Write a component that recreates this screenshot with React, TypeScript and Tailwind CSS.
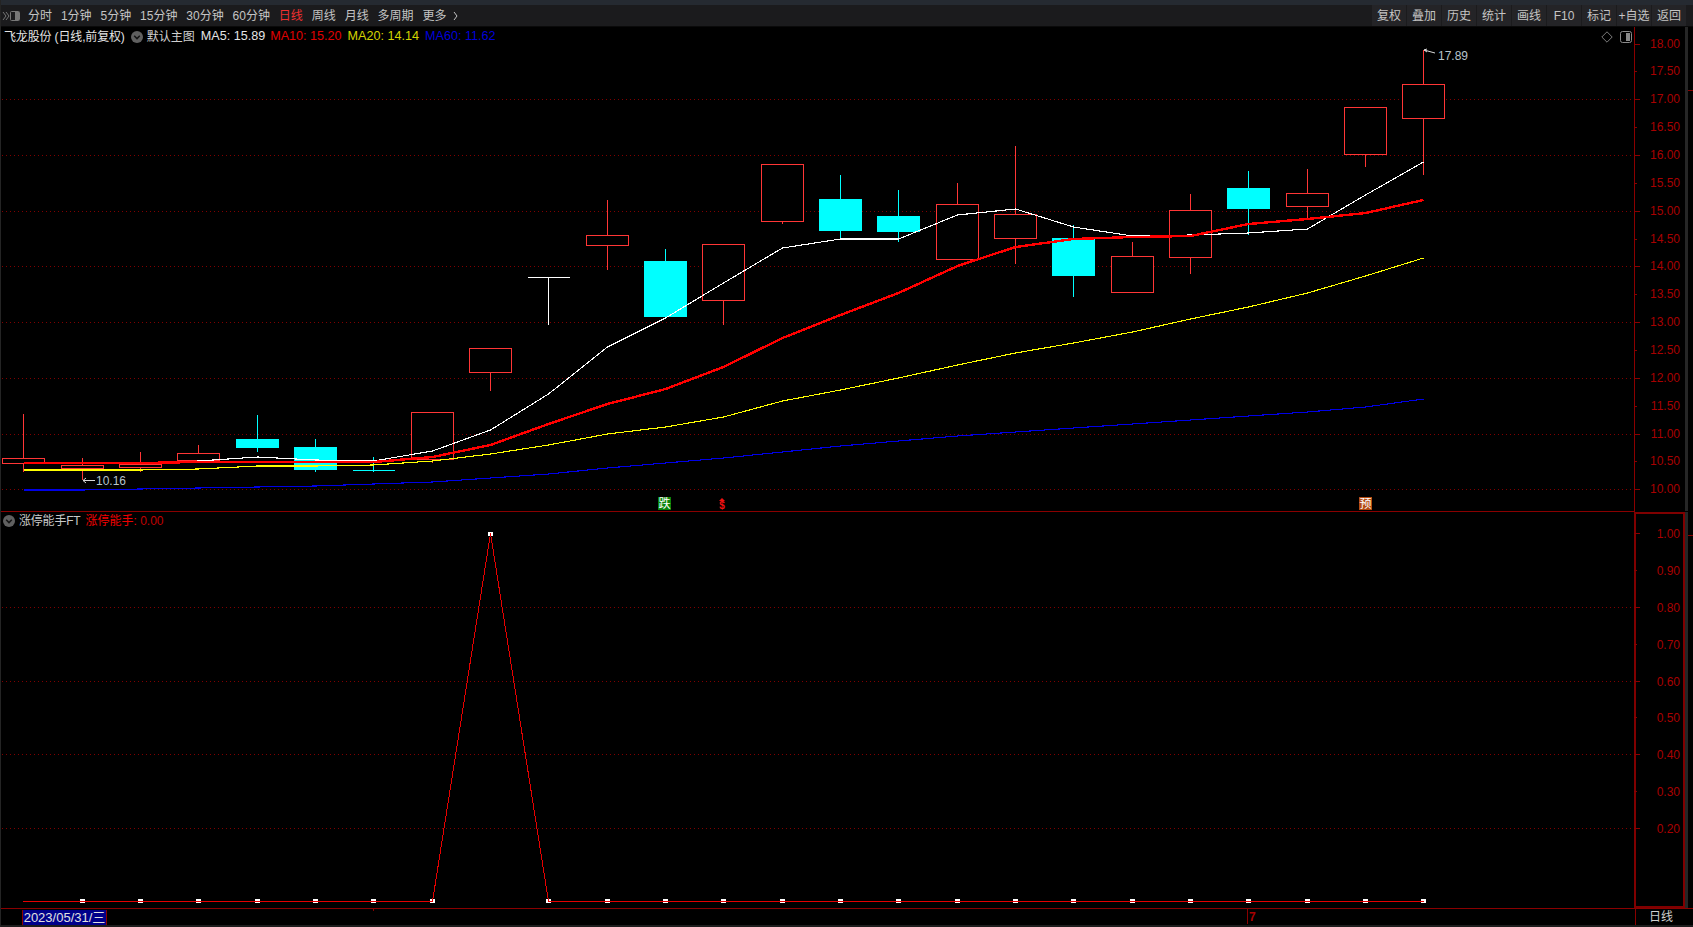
const FONT = "font-['Liberation_Sans','Noto_Sans_CJK_SC',sans-serif]";

const MAIN_TOP = 27;
const MAIN_H = 484;
const SUB_TOP = 512;
const SUB_H = 396;

const cx = (i: number) => Math.round(23.3 + 58.33 * i) + 0.5;
const priceY = (p: number) => 489.3 - 55.71 * (p - 10);
const subY = (v: number) => 901.3 - 368 * v;

// kind, body top, body bottom, high, low
type Candle = ['r' | 'c' | 'w', number, number, number, number];
const candles: Candle[] = [
  ['r', 458, 463, 414, 472],
  ['r', 465, 468, 458, 480],
  ['r', 464, 467, 452, 472],
  ['r', 453, 460, 445, 462],
  ['c', 439, 448, 415, 452],
  ['c', 447, 470, 439, 472],
  ['c', 470, 471, 457, 472],
  ['r', 412, 459, 412, 463],
  ['r', 348, 372, 348, 391],
  ['w', 277, 278, 277, 325],
  ['r', 235, 245, 200, 270],
  ['c', 261, 317, 249, 317],
  ['r', 244, 300, 244, 325],
  ['r', 164, 221, 164, 224],
  ['c', 199, 231, 175, 240],
  ['c', 216, 232, 190, 242],
  ['r', 204, 259, 183, 259],
  ['r', 214, 238, 146, 264],
  ['c', 238, 276, 225, 297],
  ['r', 256, 292, 242, 292],
  ['r', 210, 257, 194, 274],
  ['c', 188, 209, 171, 235],
  ['r', 193, 206, 169, 218],
  ['r', 107, 154, 107, 167],
  ['r', 84, 118, 50, 175],
];

const ma5 = [463, 463, 463, 461, 457, 460, 461, 451, 430, 394, 347, 318, 283, 248, 239, 239, 215, 209, 227, 236, 235, 233, 229, 195, 162];
const ma10 = [463, 463, 463, 462, 462, 462, 462, 457, 445, 424, 404, 389, 367, 338, 315, 293, 266, 247, 239, 237, 236, 224, 219, 213, 200];
const ma20 = [470, 470, 470, 469, 466, 466, 465, 461, 454, 445, 434, 427, 417, 401, 390, 378, 365, 353, 343, 332, 319, 307, 293, 276, 258];
const ma60 = [490, 490, 489, 488, 487, 486, 484, 482, 478, 474, 468, 463, 458, 452, 446, 441, 436, 432, 428, 424, 420, 416, 412, 407, 399];

const pts = (ys: number[]) => ys.map((y, i) => `${cx(i)},${y}`).join(' ');

const periods = ['分时', '1分钟', '5分钟', '15分钟', '30分钟', '60分钟', '日线', '周线', '月线', '多周期', '更多'];
const tools = ['复权', '叠加', '历史', '统计', '画线', 'F10', '标记', '+自选', '返回'];

function Toolbar() {
  return (
    <div className="h-[22px] flex items-center bg-[#1b1b1d] text-[12px] text-[#c4c4c4] border-b border-[#0a0a0a]">
      <svg width="19" height="12" viewBox="0 0 19 12" className="ml-px mr-[7px] shrink-0">
        <path d="M1 2l3 4-3 4M4 2l3 4-3 4" fill="none" stroke="#777" strokeWidth="1" />
        <rect x="8.5" y="1.5" width="9" height="9" rx="1" fill="none" stroke="#777" />
        <rect x="13" y="2" width="4" height="8" fill="#777" />
      </svg>
      <div className="flex items-center gap-[8.9px] pt-px">
        {periods.map((p) => (
          <span key={p} className={p === '日线' ? 'text-[#f03030]' : ''}>{p}</span>
        ))}
        <svg width="5" height="10" viewBox="0 0 5 10" className="-ml-[2px]">
          <path d="M1 1l3 4-3 4" fill="none" stroke="#c4c4c4" />
        </svg>
      </div>
      <div className="ml-auto mr-[7px] flex h-full gap-px">
        {tools.map((t) => (
          <div key={t} className="w-[34px] flex items-center justify-center bg-[#242427] whitespace-nowrap pt-px">{t}</div>
        ))}
      </div>
    </div>
  );
}

function CircleIcon() {
  return (
    <svg width="12" height="12" viewBox="0 0 12 12" className="shrink-0">
      <circle cx="6" cy="6" r="6" fill="#606060" />
      <path d="M3.2 4.8L6 7.6l2.8-2.8" fill="none" stroke="#151515" strokeWidth="1.5" />
    </svg>
  );
}

function MainChart() {
  return (
    <svg width={1633} height={MAIN_H} viewBox={`1 ${MAIN_TOP} 1633 ${MAIN_H}`} className="block shrink-0">
      {[17, 16, 15, 14, 13, 12, 11, 10].map((p) => (
        <line key={p} x1="2" x2="1631" y1={Math.round(priceY(p)) + 0.5} y2={Math.round(priceY(p)) + 0.5} stroke="#800000" strokeDasharray="1 3" shapeRendering="crispEdges" />
      ))}
      <g shapeRendering="crispEdges">
        {candles.map(([kind, top, bottom, hi, lo], i) => {
          const x = cx(i);
          const color = kind === 'r' ? '#ff3636' : kind === 'c' ? '#00ffff' : '#ffffff';
          return (
            <g key={i}>
              <line x1={x} x2={x} y1={hi} y2={lo} stroke={color} />
              {kind === 'r' && <rect x={x - 21} y={top + 0.5} width={42} height={bottom - top} fill="#000" stroke={color} />}
              {kind === 'c' && bottom - top > 2 && <rect x={x - 21.5} y={top} width={43} height={bottom - top} fill={color} />}
              {kind !== 'r' && bottom - top <= 2 && <line x1={x - 21} x2={x + 21} y1={top + 0.5} y2={top + 0.5} stroke={color} />}
            </g>
          );
        })}
      </g>
      <g fill="none" shapeRendering="crispEdges" strokeLinejoin="round">
        <polyline points={pts(ma5)} stroke="#ffffff" strokeWidth="1.1" />
        <polyline points={pts(ma20)} stroke="#ffff00" strokeWidth="1.1" />
        <polyline points={pts(ma60)} stroke="#0000e6" strokeWidth="1.1" />
        <polyline points={pts(ma10)} stroke="#ff0000" strokeWidth="2.4" />
      </g>
      {/* low / high price flags */}
      <path d="M95 480.5H83M86 478l-3 2.5 3 2.5" fill="none" stroke="#d8d8d8" />
      <text x="96" y="485" fontSize="12" fill="#b8c4cc">10.16</text>
      <path d="M1424 50l11 3M1424 50l3-1M1424 50l3 2" fill="none" stroke="#d8d8d8" />
      <text x="1438" y="60" fontSize="12" fill="#b8c4cc">17.89</text>
      <rect x="658" y="497" width="13" height="13" fill="#0a820a" />
      <text x="664.5" y="508" fontSize="12" textAnchor="middle" fill="#fff">跌</text>
      <path d="M722 498l3 3h-6z" fill="#f01010" />
      <text x="722" y="509" fontSize="10" fontWeight="bold" textAnchor="middle" fill="#f01010">$</text>
      <rect x="1359" y="497" width="13" height="13" fill="#b34a10" />
      <text x="1365.5" y="508" fontSize="12" textAnchor="middle" fill="#fff">预</text>
    </svg>
  );
}

function MainAxis() {
  const labels = [18, 17.5, 17, 16.5, 16, 15.5, 15, 14.5, 14, 13.5, 13, 12.5, 12, 11.5, 11, 10.5, 10];
  return (
    <svg width={51} height={MAIN_H} viewBox={`1634 ${MAIN_TOP} 51 ${MAIN_H}`} className="block shrink-0">
      <line x1="1634.5" x2="1634.5" y1={MAIN_TOP} y2={MAIN_TOP + MAIN_H} stroke="#8a0000" shapeRendering="crispEdges" />
      {labels.map((p) => {
        const y = Math.round(priceY(p)) + 0.5;
        return (
          <g key={p}>
            <line x1="1634" x2={Number.isInteger(p) ? 1640 : 1637} y1={y} y2={y} stroke="#8a0000" shapeRendering="crispEdges" />
            <text x="1680" y={y + 3.5} fontSize="12" textAnchor="end" fill="#a80000">{p.toFixed(2)}</text>
          </g>
        );
      })}
    </svg>
  );
}

function SubChart() {
  return (
    <svg width={1633} height={SUB_H} viewBox={`1 ${SUB_TOP} 1633 ${SUB_H}`} className="block shrink-0">
      {[0.8, 0.6, 0.4, 0.2].map((v) => (
        <line key={v} x1="2" x2="1631" y1={Math.round(subY(v)) + 0.5} y2={Math.round(subY(v)) + 0.5} stroke="#800000" strokeDasharray="1 3" shapeRendering="crispEdges" />
      ))}
      <g shapeRendering="crispEdges">
        {candles.map((_, i) =>
          i === 0 ? null : <rect key={i} x={cx(i) - 2.5} y={i === 8 ? 532 : 899} width={5} height={4} fill="#ffffff" />,
        )}
      </g>
      <polyline
        points={`23,901.5 ${cx(7)},901.5 ${cx(8)},533.5 ${cx(9)},901.5 ${cx(24)},901.5`}
        fill="none"
        stroke="#e60000"
        strokeWidth="1"
        shapeRendering="crispEdges"
      />
    </svg>
  );
}

function SubAxis() {
  const labels = [1, 0.9, 0.8, 0.7, 0.6, 0.5, 0.4, 0.3, 0.2];
  return (
    <svg width={51} height={SUB_H} viewBox={`1634 ${SUB_TOP} 51 ${SUB_H}`} className="block shrink-0">
      <rect x="1635" y={SUB_TOP + 1} width="49" height={SUB_H - 2} fill="none" stroke="#800000" strokeWidth="2" shapeRendering="crispEdges" />
      {labels.map((v, i) => {
        const y = Math.round(subY(v)) + 0.5;
        return (
          <g key={v}>
            <line x1="1634" x2={i % 2 === 0 ? 1640 : 1637} y1={y} y2={y} stroke="#8a0000" shapeRendering="crispEdges" />
            <text x="1680" y={y + 4.5} fontSize="12" textAnchor="end" fill="#a80000">{v.toFixed(2)}</text>
          </g>
        );
      })}
    </svg>
  );
}

export default function App() {
  return (
    <div className={`w-[1693px] h-[927px] bg-black flex flex-col overflow-hidden border-l border-[#242424] ${FONT}`}>
      <div className="h-[5px] shrink-0 bg-[#252a31]" />
      <Toolbar />

      {/* main pane */}
      <div className="relative flex shrink-0 h-[484px]">
        <MainChart />
        <MainAxis />
        <div className="w-[3px] bg-[#262626]" />
        <div className="w-[5px] relative">
          <div className="absolute top-[63px] left-0 right-0 h-px bg-[#8a0000]" />
        </div>

        <div className="absolute left-[3px] top-0 h-[19px] flex items-center text-[12px] whitespace-nowrap">
          <span className="text-[#e4e4e4] mr-[6px] tracking-[-0.15px]">飞龙股份 (日线,前复权)</span>
          <CircleIcon />
          <span className="text-[#d0d0d0] ml-1 mr-[6px]">默认主图</span>
          <span className="text-[#e4e4e4] text-[12.6px] mr-[5px]">MA5: 15.89</span>
          <span className="text-[#e00000] text-[12.6px] mr-[6px]">MA10: 15.20</span>
          <span className="text-[#d4d400] text-[12.6px] mr-[6px]">MA20: 14.14</span>
          <span className="text-[#0000d8] text-[12.6px]">MA60: 11.62</span>
        </div>

        <div className="absolute left-[1600px] top-[4px] flex items-center gap-[7px]">
          <svg width="12" height="12" viewBox="0 0 12 12">
            <path d="M6 .8L11.2 6 6 11.2.8 6z" fill="none" stroke="#7a7a7a" />
          </svg>
          <svg width="12" height="12" viewBox="0 0 12 12">
            <rect x=".5" y=".5" width="11" height="11" rx="2" fill="none" stroke="#8a8a8a" />
            <rect x="6" y="2" width="4" height="8" fill="#8a8a8a" />
          </svg>
        </div>
      </div>

      <div className="h-px w-[1634px] shrink-0 bg-[#8a0000]" />

      {/* indicator pane */}
      <div className="relative flex shrink-0 h-[396px]">
        <SubChart />
        <SubAxis />
        <div className="w-[3px] bg-[#262626]" />
        <div className="w-[5px] relative">
          <div className="absolute top-[23px] left-0 right-0 h-px bg-[#8a0000]" />
        </div>

        <div className="absolute left-[2px] top-0 h-[18px] flex items-center text-[12px] whitespace-nowrap">
          <CircleIcon />
          <span className="text-[#c8c8c8] ml-1 mr-[5px] tracking-[-0.2px]">涨停能手FT</span>
          <span className="text-[#f00000]">涨停能手:&nbsp;</span>
          <span className="text-[#c00000]">0.00</span>
        </div>
      </div>

      {/* time axis */}
      <div className="h-[17px] shrink-0 flex border-t border-[#8a0000] text-[12px]">
        <div className="relative w-[1634px] shrink-0">
          <div className="absolute left-[21px] top-px h-[15px] w-[85px] bg-[#00008a] border-x border-[#8a0000] flex items-center justify-center text-[13px] whitespace-nowrap text-[#e0e0e0]">
            2023/05/31/三
          </div>
          <div className="absolute left-[372px] top-0 h-[2px] w-px bg-[#8a0000]" />
          <div className="absolute left-[1246px] top-0 h-[15px] border-l border-[#8a0000] pl-px text-[#a80000] leading-[16px] font-bold">7</div>
        </div>
        <div className="w-[51px] border-l border-[#8a0000] flex items-center justify-center text-[#d0d0d0]">日线</div>
      </div>

      <div className="flex-1 bg-[#1d1d1d]" />
    </div>
  );
}
